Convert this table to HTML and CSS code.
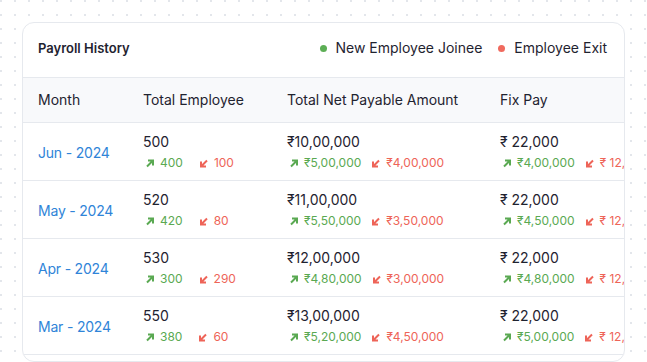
FILE: index.html
```html
<!DOCTYPE html>
<html lang="en">
<head>
    <meta charset="UTF-8">
    <meta name="viewport" content="width=device-width, initial-scale=1.0">
    <title>Payroll History</title>
    <link rel="stylesheet" href="styles.css">
</head>
<body>
    <div class="card">
        <div class="card-header">
            <h2 class="title">Payroll History</h2>
            <div class="legend">
                <span class="legend-item"><span class="dot dot-green"></span>New Employee Joinee</span>
                <span class="legend-item"><span class="dot dot-red"></span>Employee Exit</span>
            </div>
        </div>

        <div class="table-wrap">
            <table class="payroll">
                <colgroup>
                    <col class="col-month">
                    <col class="col-emp">
                    <col class="col-net">
                    <col class="col-fix">
                </colgroup>
                <thead>
                    <tr>
                        <th>Month</th>
                        <th>Total Employee</th>
                        <th>Total Net Payable Amount</th>
                        <th>Fix Pay</th>
                    </tr>
                </thead>
                <tbody>
                    <tr>
                        <td class="month">Jun - 2024</td>
                        <td>
                            <div class="main">500</div>
                            <div class="sub sub-wide">
                                <span class="up"><svg viewBox="0 0 10 10"><path d="M2 8.5L8 2.5M3 2.5H8V7.5"/></svg>400</span>
                                <span class="down"><svg viewBox="0 0 10 10"><path d="M8 2.5L2 8.5M2 3.5V8.5H7"/></svg>100</span>
                            </div>
                        </td>
                        <td>
                            <div class="main">₹10,00,000</div>
                            <div class="sub">
                                <span class="up"><svg viewBox="0 0 10 10"><path d="M2 8.5L8 2.5M3 2.5H8V7.5"/></svg>₹5,00,000</span>
                                <span class="down"><svg viewBox="0 0 10 10"><path d="M8 2.5L2 8.5M2 3.5V8.5H7"/></svg>₹4,00,000</span>
                            </div>
                        </td>
                        <td>
                            <div class="main">₹ 22,000</div>
                            <div class="sub">
                                <span class="up"><svg viewBox="0 0 10 10"><path d="M2 8.5L8 2.5M3 2.5H8V7.5"/></svg>₹4,00,000</span>
                                <span class="down"><svg viewBox="0 0 10 10"><path d="M8 2.5L2 8.5M2 3.5V8.5H7"/></svg>₹ 12,000</span>
                            </div>
                        </td>
                    </tr>
                    <tr>
                        <td class="month">May - 2024</td>
                        <td>
                            <div class="main">520</div>
                            <div class="sub sub-wide">
                                <span class="up"><svg viewBox="0 0 10 10"><path d="M2 8.5L8 2.5M3 2.5H8V7.5"/></svg>420</span>
                                <span class="down"><svg viewBox="0 0 10 10"><path d="M8 2.5L2 8.5M2 3.5V8.5H7"/></svg>80</span>
                            </div>
                        </td>
                        <td>
                            <div class="main">₹11,00,000</div>
                            <div class="sub">
                                <span class="up"><svg viewBox="0 0 10 10"><path d="M2 8.5L8 2.5M3 2.5H8V7.5"/></svg>₹5,50,000</span>
                                <span class="down"><svg viewBox="0 0 10 10"><path d="M8 2.5L2 8.5M2 3.5V8.5H7"/></svg>₹3,50,000</span>
                            </div>
                        </td>
                        <td>
                            <div class="main">₹ 22,000</div>
                            <div class="sub">
                                <span class="up"><svg viewBox="0 0 10 10"><path d="M2 8.5L8 2.5M3 2.5H8V7.5"/></svg>₹4,50,000</span>
                                <span class="down"><svg viewBox="0 0 10 10"><path d="M8 2.5L2 8.5M2 3.5V8.5H7"/></svg>₹ 12,000</span>
                            </div>
                        </td>
                    </tr>
                    <tr>
                        <td class="month">Apr - 2024</td>
                        <td>
                            <div class="main">530</div>
                            <div class="sub sub-wide">
                                <span class="up"><svg viewBox="0 0 10 10"><path d="M2 8.5L8 2.5M3 2.5H8V7.5"/></svg>300</span>
                                <span class="down"><svg viewBox="0 0 10 10"><path d="M8 2.5L2 8.5M2 3.5V8.5H7"/></svg>290</span>
                            </div>
                        </td>
                        <td>
                            <div class="main">₹12,00,000</div>
                            <div class="sub">
                                <span class="up"><svg viewBox="0 0 10 10"><path d="M2 8.5L8 2.5M3 2.5H8V7.5"/></svg>₹4,80,000</span>
                                <span class="down"><svg viewBox="0 0 10 10"><path d="M8 2.5L2 8.5M2 3.5V8.5H7"/></svg>₹3,00,000</span>
                            </div>
                        </td>
                        <td>
                            <div class="main">₹ 22,000</div>
                            <div class="sub">
                                <span class="up"><svg viewBox="0 0 10 10"><path d="M2 8.5L8 2.5M3 2.5H8V7.5"/></svg>₹4,80,000</span>
                                <span class="down"><svg viewBox="0 0 10 10"><path d="M8 2.5L2 8.5M2 3.5V8.5H7"/></svg>₹ 12,000</span>
                            </div>
                        </td>
                    </tr>
                    <tr>
                        <td class="month">Mar - 2024</td>
                        <td>
                            <div class="main">550</div>
                            <div class="sub sub-wide">
                                <span class="up"><svg viewBox="0 0 10 10"><path d="M2 8.5L8 2.5M3 2.5H8V7.5"/></svg>380</span>
                                <span class="down"><svg viewBox="0 0 10 10"><path d="M8 2.5L2 8.5M2 3.5V8.5H7"/></svg>60</span>
                            </div>
                        </td>
                        <td>
                            <div class="main">₹13,00,000</div>
                            <div class="sub">
                                <span class="up"><svg viewBox="0 0 10 10"><path d="M2 8.5L8 2.5M3 2.5H8V7.5"/></svg>₹5,20,000</span>
                                <span class="down"><svg viewBox="0 0 10 10"><path d="M8 2.5L2 8.5M2 3.5V8.5H7"/></svg>₹4,50,000</span>
                            </div>
                        </td>
                        <td>
                            <div class="main">₹ 22,000</div>
                            <div class="sub">
                                <span class="up"><svg viewBox="0 0 10 10"><path d="M2 8.5L8 2.5M3 2.5H8V7.5"/></svg>₹5,00,000</span>
                                <span class="down"><svg viewBox="0 0 10 10"><path d="M8 2.5L2 8.5M2 3.5V8.5H7"/></svg>₹ 12,000</span>
                            </div>
                        </td>
                    </tr>
                </tbody>
            </table>
        </div>
    </div>
</body>
</html>
```

FILE: styles.css
```css
* {
    box-sizing: border-box;
    margin: 0;
    padding: 0;
}

body {
    font-family: Inter, "Noto Sans", sans-serif;
    color: #1f2330;
    background-color: #ffffff;
    background-image: radial-gradient(circle, #e3e6eb 1px, transparent 1.5px);
    background-size: 14px 14px;
    background-position: -6px -6px;
    padding: 22px 22px 0 22px;
    height: 362px;
    overflow: hidden;
}

.card {
    background: white;
    border: 1px solid #e6e9ee;
    border-radius: 12px;
    overflow: hidden;
    padding-bottom: 6px;
}

.card-header {
    display: flex;
    justify-content: space-between;
    align-items: center;
    padding: 15px 17px 19px 15px;
    border-bottom: 1px solid #e6e9ee;
    line-height: 20px;
}

.title {
    font-size: 13px;
    font-weight: 600;
    color: #1f2330;
}

.legend {
    display: flex;
    gap: 16px;
    font-size: 14px;
}

.legend-item {
    display: flex;
    align-items: center;
    gap: 9px;
}

.dot {
    width: 7px;
    height: 7px;
    border-radius: 50%;
}

.dot-green {
    background-color: #5cae55;
}

.dot-red {
    background-color: #f06a5e;
}

/* table scrolls sideways in the real app, so the last column is cut */
.table-wrap {
    overflow: hidden;
}

.payroll {
    border-collapse: collapse;
    table-layout: fixed;
    width: 680px;
    font-size: 14px;
}

.col-month { width: 105px; }
.col-emp { width: 144px; }
.col-net { width: 213px; }
.col-fix { width: 218px; }

.payroll th {
    background-color: #f8f9fb;
    font-weight: 400;
    text-align: left;
    height: 44px;
    padding: 0 15px;
    border-bottom: 1px solid #e6e9ee;
    white-space: nowrap;
}

.payroll td {
    height: 58px;
    padding: 0 15px;
    border-bottom: 1px solid #e6e9ee;
    vertical-align: middle;
    white-space: nowrap;
}

.payroll td.month {
    color: #2f84d8;
    padding-top: 3px;
    letter-spacing: -0.2px;
}

.main {
    line-height: 20px;
    color: #1f2330;
}

.sub {
    display: flex;
    gap: 8px;
    margin-top: 3px;
    font-size: 12px;
    line-height: 16px;
}

.sub-wide {
    gap: 14px;
}

.sub span {
    display: flex;
    align-items: center;
    gap: 5px;
}

.sub svg {
    width: 10px;
    height: 10px;
    margin-left: 2px;
    fill: none;
    stroke: currentColor;
    stroke-width: 2;
}

.up {
    color: #5aa952;
}

.down {
    color: #ee6458;
}
```
